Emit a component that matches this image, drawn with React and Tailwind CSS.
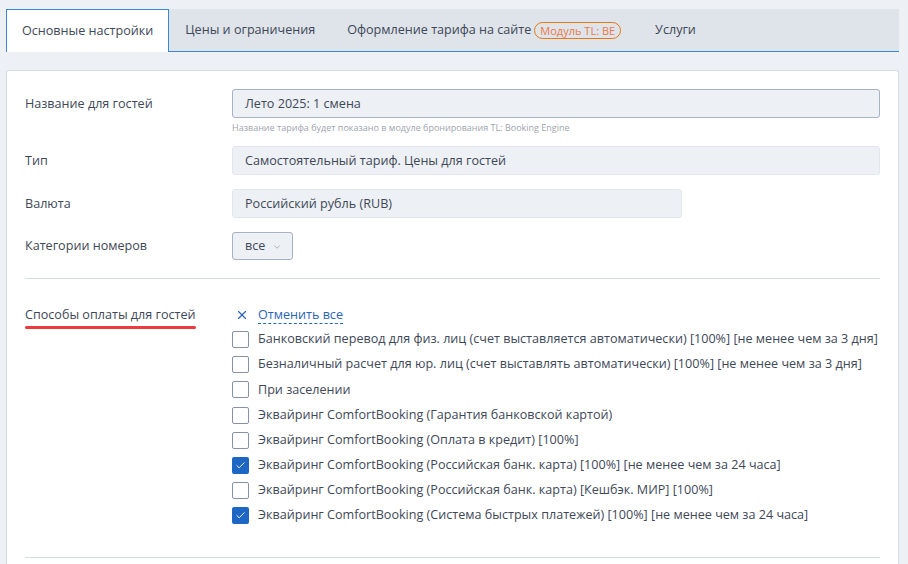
import { ChevronDown, X, Check } from 'lucide-react';

const tabs = [
  { label: 'Основные настройки', active: true },
  { label: 'Цены и ограничения' },
  { label: 'Оформление тарифа на сайте', badge: 'Модуль TL: BE' },
  { label: 'Услуги' },
];

const payments = [
  { label: 'Банковский перевод для физ. лиц (счет выставляется автоматически) [100%] [не менее чем за 3 дня]' },
  { label: 'Безналичный расчет для юр. лиц (счет выставлять автоматически) [100%] [не менее чем за 3 дня]' },
  { label: 'При заселении' },
  { label: 'Эквайринг ComfortBooking (Гарантия банковской картой)' },
  { label: 'Эквайринг ComfortBooking (Оплата в кредит) [100%]' },
  { label: 'Эквайринг ComfortBooking (Российская банк. карта) [100%] [не менее чем за 24 часа]', checked: true },
  { label: 'Эквайринг ComfortBooking (Российская банк. карта) [Кешбэк. МИР] [100%]' },
  { label: 'Эквайринг ComfortBooking (Система быстрых платежей) [100%] [не менее чем за 24 часа]', checked: true },
];

const Field = ({ label, children, className = '' }) => (
  <div className={`flex items-center ${className}`}>
    <div className="w-[207px] shrink-0 pt-[1px] text-[#3e4857]">{label}</div>
    <div className="flex-1">{children}</div>
  </div>
);

export default function App() {
  return (
    <div className="min-h-screen bg-[#edf0f4] px-[6px] pt-[9px] font-['Open_Sans',sans-serif] text-[12.6px] text-[#3e4857]">
      <div className="flex h-[43px] w-[893px] border-b border-[#3a87d9] bg-[#dfe3ea]">
        {tabs.map((tab) => (
          <div
            key={tab.label}
            className={
              tab.active
                ? '-mb-px flex items-center border border-b-0 border-[#3a87d9] bg-white px-[15px] text-[#3e4857]'
                : 'flex items-center px-4 text-[#3e4857]'
            }
          >
            {tab.label}
            {tab.badge && (
              <span className="ml-[3px] mr-[2px] rounded-full border border-[#e8780f] px-[5px] text-[11px] leading-[15px] text-[#ec7a45]">
                {tab.badge}
              </span>
            )}
          </div>
        ))}
      </div>

      <div className="mt-[18px] w-[893px] rounded-t-[3px] border border-b-0 border-[#d5dce6] bg-white px-[18px] pt-[18px] pb-[6px]">
        <Field label="Название для гостей">
          <div className="flex h-[29px] items-center rounded-[3px] border border-[#a7b2c2] bg-[#edf0f4] px-3 pt-[1px]">
            Лето 2025: 1 смена
          </div>
        </Field>
        <div className="ml-[207px] mt-[4px] text-[9px] leading-[12px] text-[#9ea4ad]">
          Название тарифа будет показано в модуле бронирования TL: Booking Engine
        </div>

        <Field label="Тип" className="mt-[12px]">
          <div className="flex h-[29px] items-center rounded-[3px] border border-[#e2e6ec] bg-[#edf0f4] px-3 pt-[1px]">
            Самостоятельный тариф. Цены для гостей
          </div>
        </Field>

        <Field label="Валюта" className="mt-[14px]">
          <div className="flex h-[29px] w-[450px] items-center rounded-[3px] border border-[#e2e6ec] bg-[#edf0f4] px-3 pt-[1px]">
            Российский рубль (RUB)
          </div>
        </Field>

        <Field label="Категории номеров" className="mt-[14px]">
          <div className="flex h-[28px] w-[61px] items-center gap-[7px] rounded-[3px] border border-[#a7b2c2] bg-[#edf0f4] pl-3 pt-[1px]">
            все
            <ChevronDown className="h-[10px] w-[10px] text-[#8a94a3]" strokeWidth={1.5} />
          </div>
        </Field>

        <div className="mt-[18px] border-t border-[#d5dce6]" />

        <div className="mt-[26px] flex">
          <div className="w-[207px] shrink-0">
            <div className="inline-block">
              <div className="leading-[20px]">Способы оплаты для гостей</div>
              <div className="mt-[1px] h-[3px] rounded-full bg-[#ee3a3f]" />
            </div>
          </div>
          <div className="flex-1">
            <div className="flex h-[20px] items-center">
              <X className="ml-[3px] h-[14px] w-[14px] text-[#2a63b8]" strokeWidth={2} />
              <span className="ml-[9px] border-b border-dashed border-[#2a63b8] leading-[16px] text-[#2a63b8]">
                Отменить все
              </span>
            </div>
            <div className="pt-[2px]">
              {payments.map((p) => (
                <div key={p.label} className="flex h-[25.2px] items-center">
                  {p.checked ? (
                    <span className="flex h-[17px] w-[17px] shrink-0 items-center justify-center rounded-[2px] bg-[#1d66c4]">
                      <Check className="h-[11px] w-[11px] text-white" strokeWidth={2} />
                    </span>
                  ) : (
                    <span className="h-[17px] w-[17px] shrink-0 rounded-[2px] border border-[#8693a6] bg-white" />
                  )}
                  <span className="ml-[9px] whitespace-nowrap">{p.label}</span>
                </div>
              ))}
            </div>
          </div>
        </div>

        <div className="mt-[28px] border-t border-[#d5dce6]" />
      </div>
    </div>
  );
}
